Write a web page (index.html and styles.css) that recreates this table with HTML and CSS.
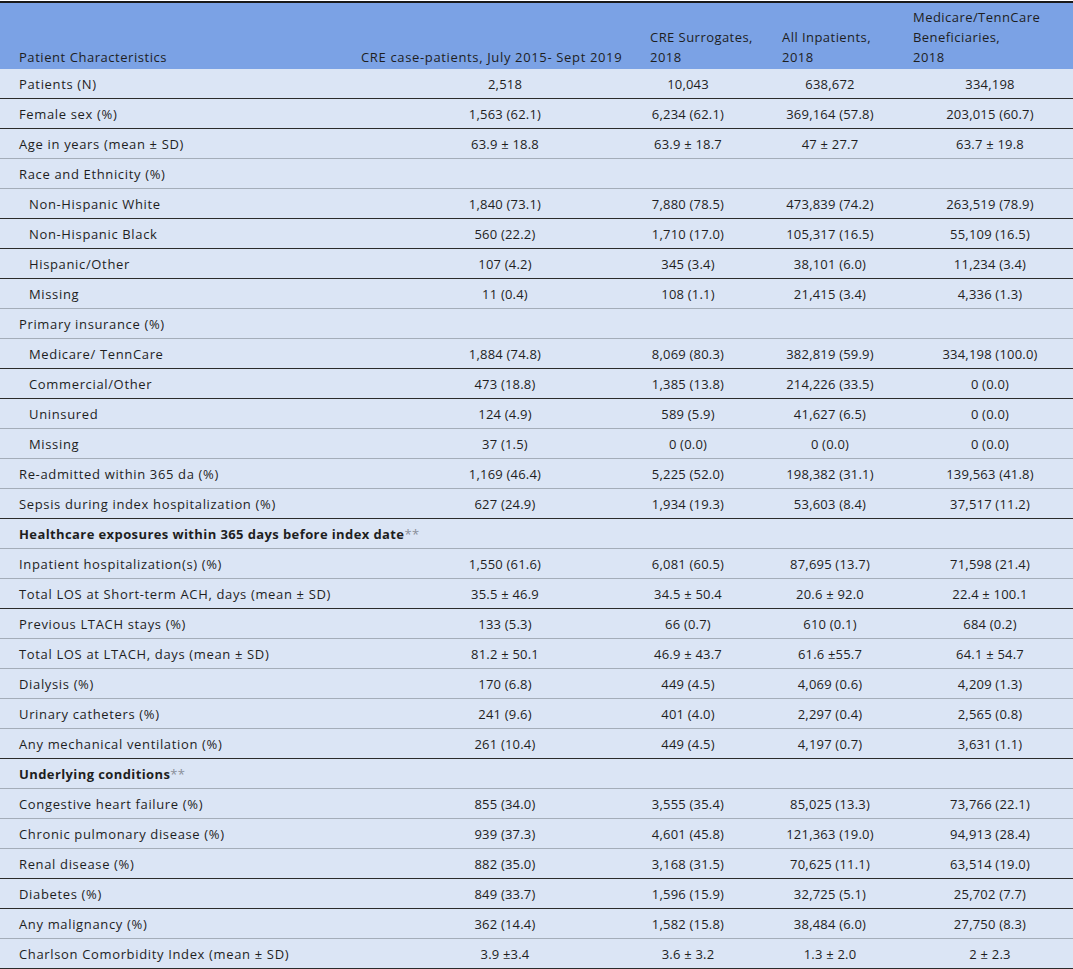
FILE: index.html
```html
<!DOCTYPE html>
<html lang="en">
<head>
<meta charset="utf-8">
<title>Patient Characteristics</title>
<link rel="stylesheet" href="styles.css">
</head>
<body>
<table class="data">
  <colgroup>
    <col class="c1"><col class="c2"><col class="c3"><col class="c4"><col class="c5">
  </colgroup>
  <thead>
    <tr>
      <th class="h1">Patient Characteristics</th>
      <th class="h2">CRE case-patients, July 2015- Sept 2019</th>
      <th class="h3">CRE Surrogates,<br>2018</th>
      <th class="h4">All Inpatients,<br>2018</th>
      <th class="h5">Medicare/TennCare<br>Beneficiaries,<br>2018</th>
    </tr>
  </thead>
  <tbody>
    <tr class="dk"><td>Patients (N)</td><td>2,518</td><td>10,043</td><td>638,672</td><td>334,198</td></tr>
    <tr class="dk"><td>Female sex (%)</td><td>1,563 (62.1)</td><td>6,234 (62.1)</td><td>369,164 (57.8)</td><td>203,015 (60.7)</td></tr>
    <tr><td>Age in years (mean ± SD)</td><td>63.9 ± 18.8</td><td>63.9 ± 18.7</td><td>47 ± 27.7</td><td>63.7 ± 19.8</td></tr>
    <tr><td>Race and Ethnicity (%)</td><td></td><td></td><td></td><td></td></tr>
    <tr class="dk"><td class="sub">Non-Hispanic White</td><td>1,840 (73.1)</td><td>7,880 (78.5)</td><td>473,839 (74.2)</td><td>263,519 (78.9)</td></tr>
    <tr class="dk"><td class="sub">Non-Hispanic Black</td><td>560 (22.2)</td><td>1,710 (17.0)</td><td>105,317 (16.5)</td><td>55,109 (16.5)</td></tr>
    <tr class="dk"><td class="sub">Hispanic/Other</td><td>107 (4.2)</td><td>345 (3.4)</td><td>38,101 (6.0)</td><td>11,234 (3.4)</td></tr>
    <tr><td class="sub">Missing</td><td>11 (0.4)</td><td>108 (1.1)</td><td>21,415 (3.4)</td><td>4,336 (1.3)</td></tr>
    <tr><td>Primary insurance (%)</td><td></td><td></td><td></td><td></td></tr>
    <tr class="dk"><td class="sub">Medicare/ TennCare</td><td>1,884 (74.8)</td><td>8,069 (80.3)</td><td>382,819 (59.9)</td><td>334,198 (100.0)</td></tr>
    <tr class="dk"><td class="sub">Commercial/Other</td><td>473 (18.8)</td><td>1,385 (13.8)</td><td>214,226 (33.5)</td><td>0 (0.0)</td></tr>
    <tr><td class="sub">Uninsured</td><td>124 (4.9)</td><td>589 (5.9)</td><td>41,627 (6.5)</td><td>0 (0.0)</td></tr>
    <tr><td class="sub">Missing</td><td>37 (1.5)</td><td>0 (0.0)</td><td>0 (0.0)</td><td>0 (0.0)</td></tr>
    <tr><td>Re-admitted within 365 da (%)</td><td>1,169 (46.4)</td><td>5,225 (52.0)</td><td>198,382 (31.1)</td><td>139,563 (41.8)</td></tr>
    <tr class="dk"><td>Sepsis during index hospitalization (%)</td><td>627 (24.9)</td><td>1,934 (19.3)</td><td>53,603 (8.4)</td><td>37,517 (11.2)</td></tr>
    <tr><td class="sec" colspan="5">Healthcare exposures within 365 days before index date<span class="ast">**</span></td></tr>
    <tr><td>Inpatient hospitalization(s) (%)</td><td>1,550 (61.6)</td><td>6,081 (60.5)</td><td>87,695 (13.7)</td><td>71,598 (21.4)</td></tr>
    <tr class="dk"><td>Total LOS at Short-term ACH, days (mean ± SD)</td><td>35.5 ± 46.9</td><td>34.5 ± 50.4</td><td>20.6 ± 92.0</td><td>22.4 ± 100.1</td></tr>
    <tr><td>Previous LTACH stays (%)</td><td>133 (5.3)</td><td>66 (0.7)</td><td>610 (0.1)</td><td>684 (0.2)</td></tr>
    <tr><td>Total LOS at LTACH, days (mean ± SD)</td><td>81.2 ± 50.1</td><td>46.9 ± 43.7</td><td>61.6 ±55.7</td><td>64.1 ± 54.7</td></tr>
    <tr><td>Dialysis (%)</td><td>170 (6.8)</td><td>449 (4.5)</td><td>4,069 (0.6)</td><td>4,209 (1.3)</td></tr>
    <tr><td>Urinary catheters (%)</td><td>241 (9.6)</td><td>401 (4.0)</td><td>2,297 (0.4)</td><td>2,565 (0.8)</td></tr>
    <tr class="dk"><td>Any mechanical ventilation (%)</td><td>261 (10.4)</td><td>449 (4.5)</td><td>4,197 (0.7)</td><td>3,631 (1.1)</td></tr>
    <tr><td class="sec" colspan="5">Underlying conditions<span class="ast">**</span></td></tr>
    <tr><td>Congestive heart failure (%)</td><td>855 (34.0)</td><td>3,555 (35.4)</td><td>85,025 (13.3)</td><td>73,766 (22.1)</td></tr>
    <tr><td>Chronic pulmonary disease (%)</td><td>939 (37.3)</td><td>4,601 (45.8)</td><td>121,363 (19.0)</td><td>94,913 (28.4)</td></tr>
    <tr class="dk"><td>Renal disease (%)</td><td>882 (35.0)</td><td>3,168 (31.5)</td><td>70,625 (11.1)</td><td>63,514 (19.0)</td></tr>
    <tr class="dk"><td>Diabetes (%)</td><td>849 (33.7)</td><td>1,596 (15.9)</td><td>32,725 (5.1)</td><td>25,702 (7.7)</td></tr>
    <tr><td>Any malignancy (%)</td><td>362 (14.4)</td><td>1,582 (15.8)</td><td>38,484 (6.0)</td><td>27,750 (8.3)</td></tr>
    <tr class="dk"><td>Charlson Comorbidity Index (mean ± SD)</td><td>3.9 ±3.4</td><td>3.6 ± 3.2</td><td>1.3 ± 2.0</td><td>2 ± 2.3</td></tr>
  </tbody>
</table>
</body>
</html>
```
FILE: styles.css
```css
html, body {
  margin: 0;
  padding: 0;
  background: #ffffff;
}
body {
  padding-top: 1px;
  font-family: "Open Sans", "Noto Sans", sans-serif;
  font-size: 13px;
  color: #1e1e1e;
}
.data {
  width: 1073px;
  border-collapse: collapse;
  table-layout: fixed;
  border-top: 2px solid #1a1a1a;
}
.c1 { width: 352px; }
.c2 { width: 290px; }
.c3 { width: 130px; }
.c4 { width: 130px; }
.c5 { width: 171px; }

.data thead th {
  background: #7ba2e5;
  font-weight: normal;
  text-align: left;
  vertical-align: bottom;
  line-height: 20px;
  height: 60px;
  padding: 4px 0 2px 9px;
  letter-spacing: 0.45px;
  white-space: nowrap;
}
.data thead .h1 { padding-left: 19px; letter-spacing: 0.55px; }
.data thead .h2 { padding-left: 9px; letter-spacing: 0.65px; }
.data thead .h3 { padding-left: 8px; }
.data thead .h4 { padding-left: 10px; }
.data thead .h5 { padding-left: 11px; }

.data tbody td {
  background: #dbe5f5;
  height: 29px;
  padding: 0;
  line-height: 20px;
  vertical-align: middle;
  text-align: center;
  white-space: nowrap;
  border-bottom: 1px solid #a4adb9;
  letter-spacing: 0.2px;
}
.data tbody tr.dk td {
  border-bottom-color: #2b2b2b;
}
.data tbody td:nth-child(1) {
  text-align: left;
  padding-left: 19px;
  letter-spacing: 0.65px;
}
.data tbody td.sub {
  padding-left: 29px;
}
.data tbody td.sec {
  font-weight: bold;
  letter-spacing: 0.4px;
}
.data tbody td .ast {
  font-weight: normal;
  color: #8a8f99;
}
.data tbody td:nth-child(2) { padding-left: 16px; }
.data tbody td:nth-child(3) { padding-right: 38px; }
.data tbody td:nth-child(4) { padding-right: 14px; }
.data tbody td:nth-child(5) { padding-left: 5px; }
```
